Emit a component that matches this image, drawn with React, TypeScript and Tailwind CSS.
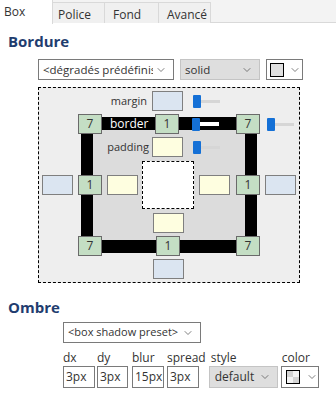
import { ChevronDown } from "lucide-react";

const font = { fontFamily: '"Open Sans", "Liberation Sans", sans-serif' };

function Chevron() {
  return <ChevronDown className="w-[12px] h-[12px] text-[#555] shrink-0" strokeWidth={1.5} />;
}

function Slider({ light }: { light?: boolean }) {
  return (
    <div className="flex items-center w-[27px] h-[14px]">
      <div className="w-[8px] h-[13px] bg-[#1470d6] rounded-[1px]" />
      {light ? (
        <div className="flex-1 h-[4px] bg-white" />
      ) : (
        <div className="flex-1 h-[3px] bg-[#d6d6d6]" />
      )}
    </div>
  );
}

function Margin() {
  return <div className="w-[31px] h-[20px] border border-[#7f7f7f] bg-[#dbe5f1]" />;
}

function Padding() {
  return <div className="w-[31px] h-[20px] border border-[#7f7f7f] bg-[#fefee0]" />;
}

function Border({ v }: { v: string }) {
  return (
    <div className="w-[24px] h-[20px] border border-[#6a6a6a] bg-[#c4dec4] text-[12px] text-[#333] flex items-center justify-center">
      {v}
    </div>
  );
}

export default function App() {
  return (
    <div className="w-[336px] h-[415px] bg-white text-[#333]" style={font}>
      {/* Tabs */}
      <div className="flex h-[23px] bg-[#f3f3f3] border-b border-[#d9d9d9] text-[12px]">
        <div className="w-[53px] h-[24px] bg-white pl-[4px] pt-[3px] border-r border-[#d9d9d9]">Box</div>
        <div className="w-[52px] h-[21px] mt-[2px] pl-[5px] pt-[3px] bg-[#f0f0f0] border-t border-r border-[#d9d9d9]">Police</div>
        <div className="w-[54px] h-[21px] mt-[2px] pl-[8px] pt-[3px] bg-[#f0f0f0] border-t border-r border-[#d9d9d9]">Fond</div>
        <div className="w-[52px] h-[21px] mt-[2px] pl-[8px] pt-[3px] bg-[#f0f0f0] border-t border-r border-[#d9d9d9]">Avancé</div>
      </div>

      {/* Bordure */}
      <h2 className="mt-[8px] ml-[8px] text-[15px] leading-[20px] font-bold text-[#1f3d6f]">Bordure</h2>
      <div className="mt-[8px] ml-[38px] flex gap-[6px] text-[11.5px]">
        <div className="w-[136px] h-[21px] border border-[#7a7a7a] bg-white flex items-center pl-[4px] pr-[6px] gap-[2px]">
          <span className="flex-1 overflow-hidden whitespace-nowrap">&lt;dégradés prédéfinis&gt;</span>
          <Chevron />
        </div>
        <div className="w-[80px] h-[21px] border border-[#c4c4c4] bg-[#dedede] flex items-center pl-[4px] pr-[6px]">
          <span className="flex-1">solid</span>
          <Chevron />
        </div>
        <div className="w-[37px] h-[21px] border border-[#7a7a7a] bg-white flex items-center pl-[3px] gap-[5px]">
          <div className="w-[14px] h-[14px] border border-black bg-[#e0e0e0]" />
          <Chevron />
        </div>
      </div>

      {/* Box model diagram */}
      <div className="mt-[7px] ml-[38px] w-[262px] border border-dashed border-black bg-[#eeeeee] pl-[3px] pt-[3px] pb-[3px]">
        <div className="grid grid-cols-[31px_24px_30px_52px_32px_24px_32px] grid-rows-[20px_20px_20px_50px_20px_20px_20px] gap-x-[5px] gap-y-[3px] text-[11px]">
          {/* frame */}
          <div className="col-start-2 col-end-7 row-start-2 row-end-7 m-[3px] border-x-[12px] border-y-[13px] border-black bg-[#dcdcdc]" />

          {/* margin row */}
          <div className="col-start-2 col-end-6 row-start-1 flex items-center justify-end pr-[11px]">
            <span className="mr-[5px]">margin</span>
            <Margin />
            <div className="ml-[10px]">
              <Slider />
            </div>
          </div>

          {/* border row */}
          <div className="col-start-2 row-start-2 z-10">
            <Border v="7" />
          </div>
          <div className="col-start-3 row-start-2 z-10 self-center ml-[3px] mt-[-1px] text-white whitespace-nowrap text-[12px] leading-[13px]">
            border
          </div>
          <div className="col-start-4 col-end-6 row-start-2 z-10 flex items-center pl-[13px]">
            <Border v="1" />
            <div className="ml-[13px]">
              <Slider light />
            </div>
          </div>
          <div className="col-start-6 row-start-2 z-10">
            <Border v="7" />
          </div>
          <div className="col-start-7 row-start-2 flex items-center pl-[2px]">
            <Slider />
          </div>

          {/* padding row */}
          <div className="col-start-2 col-end-6 row-start-3 z-10 flex items-center justify-end pr-[11px]">
            <span className="mr-[3px]">padding</span>
            <Padding />
            <div className="ml-[10px]">
              <Slider />
            </div>
          </div>

          {/* middle row */}
          <div className="col-start-1 row-start-4 self-center z-10">
            <Margin />
          </div>
          <div className="col-start-2 row-start-4 self-center z-10">
            <Border v="1" />
          </div>
          <div className="col-start-3 row-start-4 self-center z-10">
            <Padding />
          </div>
          <div className="col-start-4 row-start-4 self-center z-10 h-[48px] border border-dashed border-black bg-white" />
          <div className="col-start-5 row-start-4 self-center z-10">
            <Padding />
          </div>
          <div className="col-start-6 row-start-4 self-center z-10">
            <Border v="1" />
          </div>
          <div className="col-start-7 row-start-4 self-center z-10">
            <Margin />
          </div>

          {/* bottom rows */}
          <div className="col-start-4 row-start-5 z-10 flex justify-center">
            <Padding />
          </div>
          <div className="col-start-2 row-start-6 z-10">
            <Border v="7" />
          </div>
          <div className="col-start-4 row-start-6 z-10 flex justify-center">
            <Border v="1" />
          </div>
          <div className="col-start-6 row-start-6 z-10">
            <Border v="7" />
          </div>
          <div className="col-start-4 row-start-7 z-10 flex justify-center">
            <Margin />
          </div>
        </div>
      </div>

      {/* Ombre */}
      <h2 className="mt-[14px] ml-[8px] text-[15px] leading-[20px] font-bold text-[#1f3d6f]">Ombre</h2>
      <div className="mt-[5px] ml-[63px] w-[138px] h-[21px] border border-[#7a7a7a] bg-white flex items-center pl-[4px] pr-[6px] text-[11px]">
        <span className="flex-1 whitespace-nowrap">&lt;box shadow preset&gt;</span>
        <Chevron />
      </div>
      <div className="mt-[9px] ml-[63px] flex text-[12px]">
        {[
          { l: "dx", v: "3px", w: "w-[32px]", m: "" },
          { l: "dy", v: "3px", w: "w-[31px]", m: "ml-[2px]" },
          { l: "blur", v: "15px", w: "w-[32px]", m: "ml-[4px]" },
          { l: "spread", v: "3px", w: "w-[32px]", m: "ml-[3px]" },
        ].map((f) => (
          <div key={f.l} className={`flex flex-col ${f.m}`}>
            <span className="leading-[12px] whitespace-nowrap">{f.l}</span>
            <div className={`${f.w} mt-[2px] h-[22px] border border-[#7a7a7a] bg-white flex items-center pl-[2px]`}>
              {f.v}
            </div>
          </div>
        ))}
        <div className="flex flex-col ml-[3px]">
          <span className="leading-[12px] pl-[2px]">style</span>
          <div className="w-[69px] mt-[2px] h-[22px] border border-[#c4c4c4] bg-[#dedede] flex items-center pl-[5px] pr-[6px]">
            <span className="flex-1">default</span>
            <Chevron />
          </div>
        </div>
        <div className="flex flex-col ml-[3px]">
          <span className="leading-[12px] pl-[1px]">color</span>
          <div className="w-[38px] mt-[2px] h-[22px] border border-[#7a7a7a] bg-white flex items-center pl-[4px] gap-[6px]">
            <div className="w-[14px] h-[14px] border border-black grid grid-cols-2 grid-rows-2">
              <div className="bg-[#d4d4d4]" />
              <div className="bg-[#f4f4f4]" />
              <div className="bg-[#f4f4f4]" />
              <div className="bg-[#d4d4d4]" />
            </div>
            <Chevron />
          </div>
        </div>
      </div>
    </div>
  );
}
